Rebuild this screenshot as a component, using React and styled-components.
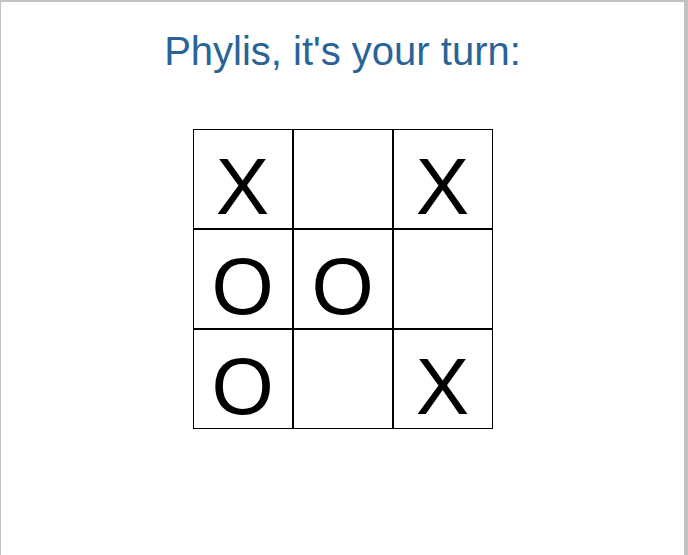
import React from "react";
import styled, { createGlobalStyle } from "styled-components";

const GlobalStyle = createGlobalStyle`
  html, body {
    margin: 0;
    padding: 0;
    background: #ffffff;
  }
  body {
    font-family: "Liberation Sans", Arial, sans-serif;
  }
`;

const Frame = styled.div`
  box-sizing: border-box;
  min-height: 100vh;
  border-top: 2px solid #c6c1c1;
  border-left: 1px solid #c6c1c1;
  border-right: 4px solid #c6c1c1;
  display: flex;
  flex-direction: column;
  align-items: center;
`;

const Title = styled.h1`
  margin: 26px 0 0;
  font-size: 40px;
  font-weight: normal;
  line-height: 46px;
  color: #2a6496;
`;

const Board = styled.div`
  margin-top: 55px;
  display: grid;
  grid-template-columns: repeat(3, 100px);
  grid-template-rows: repeat(3, 100px);
`;

const Cell = styled.div`
  box-sizing: border-box;
  border: 1px solid #000;
  display: flex;
  justify-content: center;
  padding-top: 17px;
  font-size: 80px;
  line-height: 80px;
  color: #000;
`;

const board = ["X", "", "X", "O", "O", "", "O", "", "X"];

export default function App() {
  return (
    <>
      <GlobalStyle />
      <Frame>
        <Title>Phylis, it's your turn:</Title>
        <Board>
          {board.map((v, i) => (
            <Cell key={i}>{v}</Cell>
          ))}
        </Board>
      </Frame>
    </>
  );
}
